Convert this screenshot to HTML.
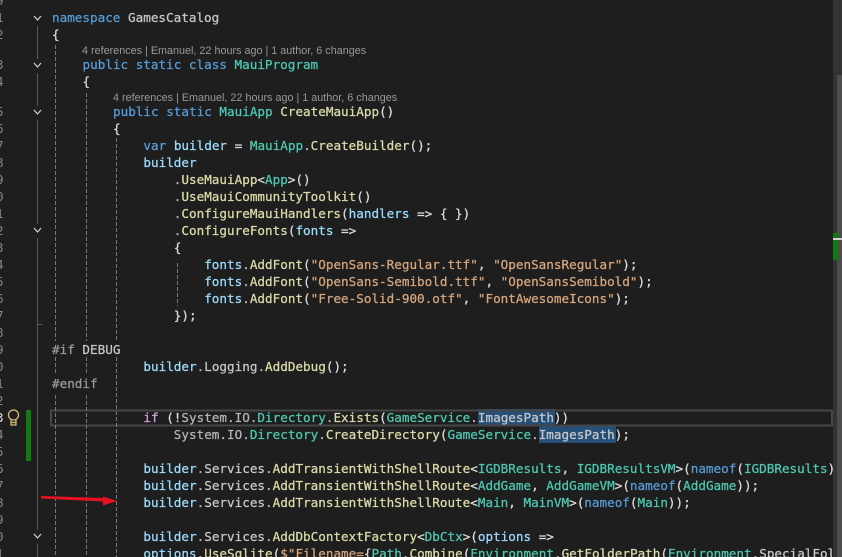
<!DOCTYPE html>
<html><head><meta charset="utf-8">
<style>
html,body{margin:0;padding:0;background:#1e1e1e;}
#r{position:relative;width:842px;height:557px;overflow:hidden;background:#1e1e1e;}
.l{position:absolute;white-space:pre;font:12.63px/17px "DejaVu Sans Mono","Liberation Mono",monospace;color:#dcdcdc;height:17px;-webkit-text-stroke:0.25px currentColor;}
.n{position:absolute;left:-4px;font:12.63px/17px "DejaVu Sans Mono","Liberation Mono",monospace;color:#858585;}
.c{position:absolute;white-space:pre;font:10.8px/14px "Liberation Sans",sans-serif;color:#999;}
.k{color:#569cd6}.t{color:#4ec9b0}.m{color:#dcdcaa}.v{color:#9cdcfe}.s{color:#d6a67e}.d{color:#b4b4b4}.p{color:#9b9b9b}.f{color:#d8a0df}.w{color:#c8c8c8}
.b{position:absolute;background:#264f78;}
svg{position:absolute;left:0;top:0;}
</style></head><body><div id="r">
<div class="b" style="left:478px;top:409px;width:77px;height:17px"></div>
<div class="b" style="left:539px;top:426px;width:77px;height:17px"></div>
<svg width="842" height="557">
<rect x="51" y="410.500" width="781" height="15" fill="none" stroke="#464646" stroke-width="2"/>
<g stroke="#5a5a5a" fill="none" stroke-width="1"><path d="M37.500 26V59M37.500 73V106M37.500 120V224M37.500 238V530M37.500 544V557M37 324.500H42"/></g>
<g stroke="#d4d4d4" fill="none" stroke-width="1.200"><path d="M34 16L37.500 20L41 16M34 63L37.500 67L41 63M34 110L37.500 114L41 110M34 228L37.500 232L41 228M34 534L37.500 538L41 534"/></g>
<g stroke="#777" fill="none" stroke-width="1" stroke-dasharray="4 2">
<path d="M55.500 45V341M55.500 357V375M55.500 395V557"/>
<path d="M86.500 93V341M86.500 357V375M86.500 395V557"/>
<path d="M116.500 138V341M116.500 357V557"/>
<path d="M177.500 263V306"/>
</g>
<rect x="26" y="410" width="5" height="51" fill="#107c10"/>
<g fill="none" stroke="#d7ba7d" stroke-width="1.300"><circle cx="13.500" cy="415" r="5"/><path d="M11 420V425H16V420M11 422.500H16"/></g>
<rect x="833" y="0" width="9" height="557" fill="#333"/>
<rect x="837" y="75" width="5" height="482" fill="#4d4d4d"/>
<rect x="833" y="233" width="5" height="27" fill="#107c10"/>
<rect x="833" y="238" width="9" height="2" fill="#d0d0d0"/>
<path d="M41 496L103 498L103 496.500L117 501L103 505.500L103 501.500L41 498.500Z" fill="#e81123"/>
</svg>

<div class="n" style="top:-8px">9</div>
<div class="n" style="top:9px">1</div>
<div class="n" style="top:26px">2</div>
<div class="n" style="top:56px">3</div>
<div class="n" style="top:73px">4</div>
<div class="n" style="top:103px">5</div>
<div class="n" style="top:120px">6</div>
<div class="n" style="top:137px">7</div>
<div class="n" style="top:154px">8</div>
<div class="n" style="top:171px">9</div>
<div class="n" style="top:188px">0</div>
<div class="n" style="top:205px">1</div>
<div class="n" style="top:222px">2</div>
<div class="n" style="top:239px">3</div>
<div class="n" style="top:256px">4</div>
<div class="n" style="top:273px">5</div>
<div class="n" style="top:290px">6</div>
<div class="n" style="top:307px">7</div>
<div class="n" style="top:324px">8</div>
<div class="n" style="top:341px">9</div>
<div class="n" style="top:358px">0</div>
<div class="n" style="top:375px">1</div>
<div class="n" style="top:392px">2</div>
<div class="n" style="top:409px;color:#ddd">3</div>
<div class="n" style="top:426px">4</div>
<div class="n" style="top:443px">5</div>
<div class="n" style="top:460px">6</div>
<div class="n" style="top:477px">7</div>
<div class="n" style="top:494px">8</div>
<div class="n" style="top:511px">9</div>
<div class="n" style="top:528px">0</div>
<div class="n" style="top:545px">1</div>

<div class="l" style="left:52px;top:9px"><span class="k">namespace</span> <span class="w">GamesCatalog</span></div>
<div class="l" style="left:52px;top:26px">{</div>
<div class="c" style="left:82px;top:44px">4 references | Emanuel, 22 hours ago | 1 author, 6 changes</div>
<div class="l" style="left:82.500px;top:56px"><span class="k">public static class</span> <span class="t">MauiProgram</span></div>
<div class="l" style="left:82.500px;top:73px">{</div>
<div class="c" style="left:113px;top:91px">4 references | Emanuel, 22 hours ago | 1 author, 6 changes</div>
<div class="l" style="left:113px;top:103px"><span class="k">public static</span> <span class="t">MauiApp</span> <span class="m">CreateMauiApp</span>()</div>
<div class="l" style="left:113px;top:120px">{</div>
<div class="l" style="left:143.400px;top:137px"><span class="k">var</span> <span class="v">builder</span> = <span class="t">MauiApp</span><span class="d">.</span><span class="m">CreateBuilder</span>();</div>
<div class="l" style="left:143.400px;top:154px"><span class="v">builder</span></div>
<div class="l" style="left:173.800px;top:171px"><span class="d">.</span><span class="m">UseMauiApp</span>&lt;<span class="t">App</span>&gt;()</div>
<div class="l" style="left:173.800px;top:188px"><span class="d">.</span><span class="m">UseMauiCommunityToolkit</span>()</div>
<div class="l" style="left:173.800px;top:205px"><span class="d">.</span><span class="m">ConfigureMauiHandlers</span>(<span class="v">handlers</span> =&gt; { })</div>
<div class="l" style="left:173.800px;top:222px"><span class="d">.</span><span class="m">ConfigureFonts</span>(<span class="v">fonts</span> =&gt;</div>
<div class="l" style="left:173.800px;top:239px">{</div>
<div class="l" style="left:204.200px;top:256px"><span class="v">fonts</span><span class="d">.</span><span class="m">AddFont</span>(<span class="s">"OpenSans-Regular.ttf"</span>, <span class="s">"OpenSansRegular"</span>);</div>
<div class="l" style="left:204.200px;top:273px"><span class="v">fonts</span><span class="d">.</span><span class="m">AddFont</span>(<span class="s">"OpenSans-Semibold.ttf"</span>, <span class="s">"OpenSansSemibold"</span>);</div>
<div class="l" style="left:204.200px;top:290px"><span class="v">fonts</span><span class="d">.</span><span class="m">AddFont</span>(<span class="s">"Free-Solid-900.otf"</span>, <span class="s">"FontAwesomeIcons"</span>);</div>
<div class="l" style="left:173.800px;top:307px">});</div>
<div class="l" style="left:52px;top:341px"><span class="p">#if</span> <span class="w">DEBUG</span></div>
<div class="l" style="left:143.400px;top:358px"><span class="v">builder</span><span class="d">.</span><span class="w">Logging</span><span class="d">.</span><span class="m">AddDebug</span>();</div>
<div class="l" style="left:52px;top:375px"><span class="p">#endif</span></div>
<div class="l" style="left:143.400px;top:409px"><span class="f">if</span> (!<span class="d">System.IO.</span><span class="t">Directory</span><span class="d">.</span><span class="m">Exists</span>(<span class="t">GameService</span><span class="d">.</span><span class="w">ImagesPath</span>))</div>
<div class="l" style="left:173.800px;top:426px"><span class="d">System.IO.</span><span class="t">Directory</span><span class="d">.</span><span class="m">CreateDirectory</span>(<span class="t">GameService</span><span class="d">.</span><span class="w">ImagesPath</span>);</div>
<div class="l" style="left:143.400px;top:460px"><span class="v">builder</span><span class="d">.</span><span class="w">Services</span><span class="d">.</span><span class="m">AddTransientWithShellRoute</span>&lt;<span class="t">IGDBResults</span>, <span class="t">IGDBResultsVM</span>&gt;(<span class="k">nameof</span>(<span class="t">IGDBResults</span>)</div>
<div class="l" style="left:143.400px;top:477px"><span class="v">builder</span><span class="d">.</span><span class="w">Services</span><span class="d">.</span><span class="m">AddTransientWithShellRoute</span>&lt;<span class="t">AddGame</span>, <span class="t">AddGameVM</span>&gt;(<span class="k">nameof</span>(<span class="t">AddGame</span>));</div>
<div class="l" style="left:143.400px;top:494px"><span class="v">builder</span><span class="d">.</span><span class="w">Services</span><span class="d">.</span><span class="m">AddTransientWithShellRoute</span>&lt;<span class="t">Main</span>, <span class="t">MainVM</span>&gt;(<span class="k">nameof</span>(<span class="t">Main</span>));</div>
<div class="l" style="left:143.400px;top:528px"><span class="v">builder</span><span class="d">.</span><span class="w">Services</span><span class="d">.</span><span class="m">AddDbContextFactory</span>&lt;<span class="t">DbCtx</span>&gt;(<span class="v">options</span> =&gt;</div>
<div class="l" style="left:143.400px;top:545px;width:689px;overflow:hidden"><span class="v">options</span><span class="d">.</span><span class="m">UseSqlite</span>(<span class="s">$"Filename=</span>{<span class="t">Path</span><span class="d">.</span><span class="m">Combine</span>(<span class="t">Environment</span><span class="d">.</span><span class="m">GetFolderPath</span>(<span class="t">Environment</span><span class="d">.</span><span class="w">SpecialFolder</span></div>
</div></body></html>
